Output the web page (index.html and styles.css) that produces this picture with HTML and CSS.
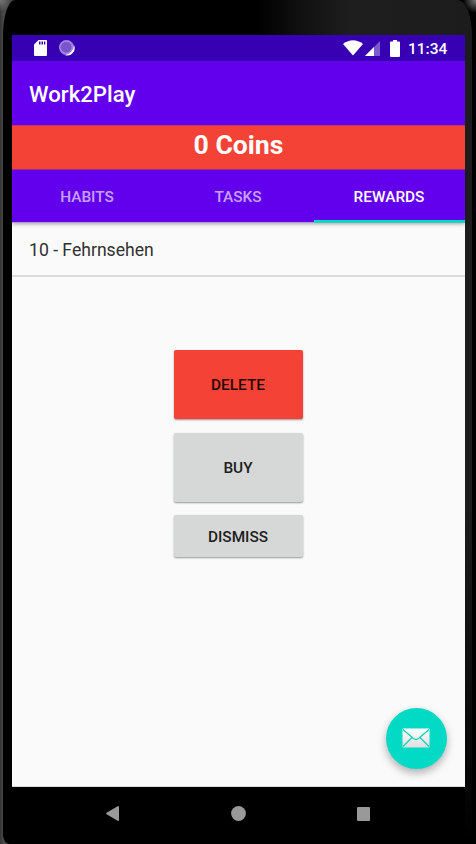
FILE: index.html
```html
<!DOCTYPE html>
<html lang="en">
<head>
<meta charset="utf-8">
<title>Work2Play</title>
<link rel="stylesheet" href="styles.css">
</head>
<body>
<div class="device">
  <div class="bezel">
    <main class="screen">
      <div class="status">
        <svg class="sd" width="13" height="16" viewBox="0 0 13 16"><path fill="#fff" fill-rule="evenodd" d="M4.500 0H12q1 0 1 1V15q0 1-1 1H1q-1 0-1-1V4.500ZM5 1.500V4.500H6.500V1.500ZM7.500 1.500V4.500H9V1.500ZM10 1.500V4.500H11.300V1.500Z"/></svg>
        <svg class="sync" width="16" height="16" viewBox="0 0 16 16"><circle cx="7.500" cy="7.500" r="7.500" fill="#9f84da"/><path d="M15 5A7.500 7.500 0 0 1 6 15.200Q14.500 13 15 5Z" fill="#fff"/><circle cx="7.200" cy="7.200" r="5.700" fill="#7a54cd" stroke="#b29ce2" stroke-width=".8" stroke-dasharray="1.500 1"/></svg>
        <svg class="wifi" width="20" height="16" viewBox="0 0 20 16"><path fill="#fff" d="M0 4Q10-3.500 20 4L10 15.500Z"/></svg>
        <svg class="signal" width="15" height="15" viewBox="0 0 15 15"><path fill="#fff" fill-opacity=".35" d="M15 0V15H0Z"/><path fill="#fff" d="M9 6V15H0Z"/></svg>
        <svg class="battery" width="10" height="17" viewBox="0 0 10 17"><path fill="#fff" d="M3 0H7V1.500H9Q10 1.500 10 2.500V16Q10 17 9 17H1Q0 17 0 16V2.500Q0 1.500 1 1.500H3Z"/></svg>
        <span class="time">11:34</span>
      </div>
      <header class="appbar">Work2Play</header>
      <div class="coins">0 Coins</div>
      <nav class="tabs">
        <span class="tab">HABITS</span>
        <span class="tab">TASKS</span>
        <span class="tab active">REWARDS</span>
      </nav>
      <div class="item">10 - Fehrnsehen</div>
      <div class="actions">
        <button class="btn delete">DELETE</button>
        <button class="btn">BUY</button>
        <button class="btn dismiss">DISMISS</button>
      </div>
      <button class="fab" aria-label="Message">
        <svg width="28" height="20" viewBox="0 0 28 20"><defs><linearGradient id="paper" x2="0" y2="1"><stop stop-color="#fff"/><stop offset="1" stop-color="#dedede"/></linearGradient></defs><rect x=".5" y=".5" width="27" height="19" rx="1" fill="url(#paper)"/><path d="M1 1.500L11.500 10.500Q14 12.500 16.500 10.500L27 1.500M1 18.500L10 9.500M27 18.500L18 9.500" fill="none" stroke="#20cdbb" stroke-width="1.300"/></svg>
      </button>
    </main>
    <footer class="nav">
      <svg width="13" height="15" viewBox="0 0 13 15"><path fill="#999" d="M12 0Q13 0 13 1V14Q13 15 12 15L.6 8.200Q-.3 7.500.6 6.800Z"/></svg>
      <svg width="15" height="15" viewBox="0 0 15 15"><circle cx="7.500" cy="7.500" r="7.400" fill="#999"/></svg>
      <svg width="13" height="14" viewBox="0 0 13 14"><rect width="13" height="14" rx="1" fill="#999"/></svg>
    </footer>
  </div>
</div>
</body>
</html>
```
FILE: styles.css
```css
* { box-sizing: border-box; }
body { margin: 0; background: #000; font-family: Roboto, sans-serif; overflow: hidden; }
.device {
  height: 844px; padding-left: 3px;
  background:
    radial-gradient(circle at 100% 0, #777, #000 13px) right top / 20px 20px no-repeat,
    radial-gradient(circle at 0 0, #777, transparent 12px),
    linear-gradient(90deg, #333, #484848 3px, #383838 20px, #000 40px);
}
.bezel {
  height: 844px; width: 469px; padding: 35px 7px 0 9px;
  border-radius: 12px 14px 4px 6px / 36px 36px 8px 10px;
  background:
    linear-gradient(180deg, transparent 60%, #000 100%),
    linear-gradient(90deg, #000 0 54%, #111 64%, #1e1e1e 74%, #1c1c1c 100%);
}
.screen { position: relative; height: 752px; background: #fafafa; border-bottom: 1px solid #d8d8d8; }
.status { height: 26px; background: #3700b3; display: flex; align-items: center; padding: 0 18px 0 22px; }
.sync { margin-left: 12px; }
.wifi { margin-left: auto; }
.signal { margin: 1px 0 0 2px; }
.battery { margin-left: 10px; }
.time { width: 39px; margin-left: 8px; padding-top: 2px; color: #fff; font-size: 15.500px; font-weight: 500; line-height: 24px; white-space: nowrap; }
.appbar { height: 64px; background: #6200ee; color: #fff; font-size: 22.200px; font-weight: 500; line-height: 67px; padding-left: 17px; }
.coins { height: 45px; border-top: 1px solid #c83262; border-bottom: 1px solid #a62b8d; background: #f44336; color: #fff; font-size: 26.600px; font-weight: 700; line-height: 37px; text-align: center; }
.tabs { position: relative; height: 52px; display: grid; grid-template: 52px / repeat(3, 1fr); background: #6200ee; box-shadow: 0 1px #b39bdc, 0 2px 4px rgba(0,0,0,.35); }
.tab { padding-right: 1px; color: rgba(255,255,255,.65); font-size: 15.400px; font-weight: 500; line-height: 54px; text-align: center; }
.tab.active { color: #fff; box-shadow: inset 0 -2px #03dac5, 0 1px #35c9b9; }
.item { height: 55px; border-bottom: 2px solid #dcdcdc; padding-left: 17px; color: #303030; font-size: 17.600px; line-height: 57px; }
.actions { display: flex; flex-direction: column; align-items: center; gap: 14px; padding-top: 73px; }
.btn { width: 129px; height: 69px; padding: 1px 1px 0 0; border: 0; border-radius: 2px; background: #d6d8d7; box-shadow: 0 1px 2px rgba(0,0,0,.4); color: #202020; font: 500 15.400px Roboto, sans-serif; }
.btn.delete { background: #f44336; color: #260805; }
.btn.dismiss { height: 42px; margin-top: -1px; }
.fab { position: absolute; right: 18px; bottom: 17px; width: 61.500px; height: 61.500px; padding: 0; border: 0; border-radius: 50%; display: grid; place-items: center; background: #03dac5; box-shadow: 0 4px 8px rgba(0,0,0,.3); }
.nav { height: 53px; background: #000; display: flex; align-items: center; justify-content: space-between; padding: 0 95px 0 94px; }
```
